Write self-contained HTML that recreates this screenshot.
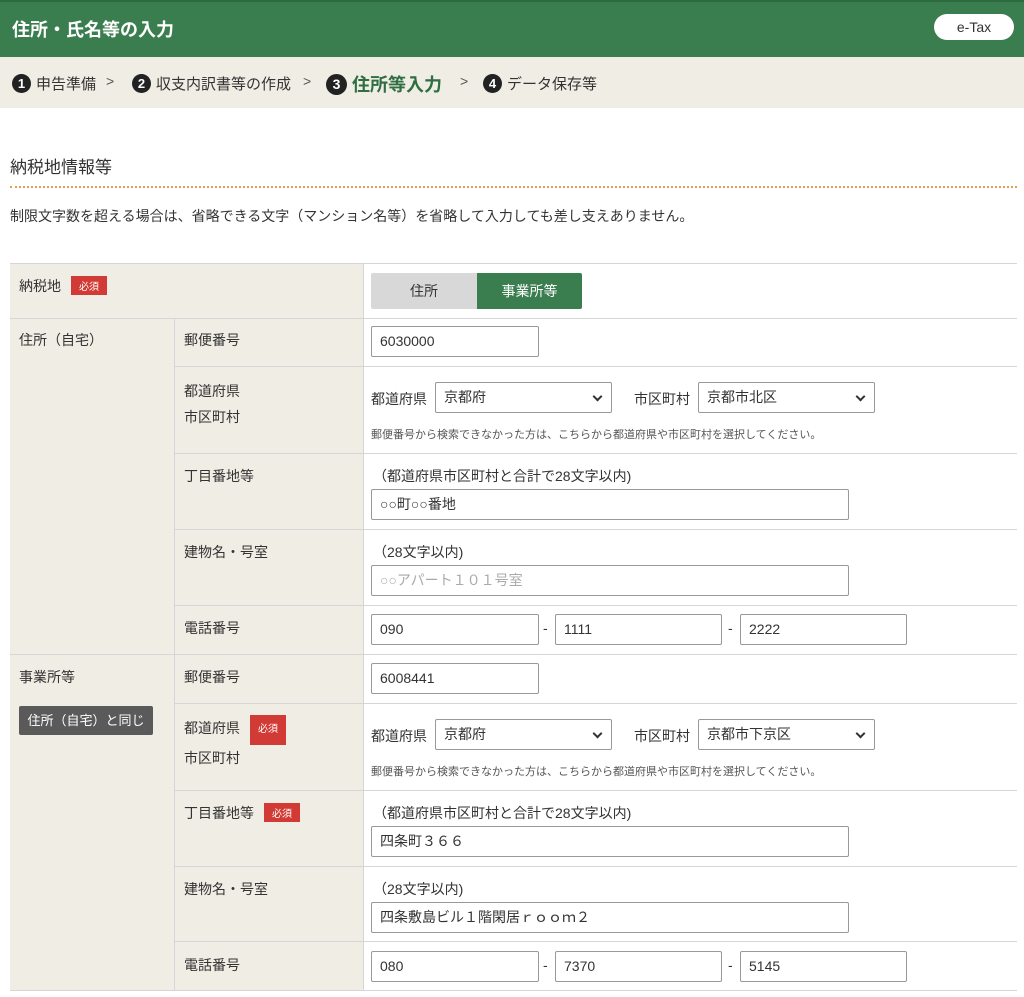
<!DOCTYPE html>
<html><head><meta charset="utf-8"><style>
*{box-sizing:border-box;margin:0;padding:0}
body{width:1024px;height:997px;background:#fff;font-family:"Liberation Sans","Noto Sans CJK JP",sans-serif;color:#333;position:relative;overflow:hidden;font-size:14px}
.a{position:absolute}
.hdr{left:0;top:0;width:1024px;height:57px;background:#3a7d4f;border-top:2px solid #2e6a40}
.hdr h1{position:absolute;left:12px;top:14px;color:#fff;font-size:18px;font-weight:bold}
.etax{right:10px;top:14px;width:80px;height:26px;background:#fff;border-radius:13px;text-align:center;line-height:26px;font-size:14px;color:#333}
.steps{left:0;top:57px;width:1024px;height:51px;background:#f0ede5}
.st{top:15px;font-size:15px;color:#333;display:flex;align-items:center}
.n{display:inline-block;width:19px;height:19px;border-radius:50%;background:#222;color:#fff;font-size:13px;font-weight:bold;text-align:center;line-height:19px;margin-right:5px}
.gt{top:73px;color:#555;font-size:14px}
.bg{background:#f0ede5}
.hl{height:1px;background:#d6d6d6}
.vl{width:1px;background:#d6d6d6}
.lab{font-size:14px;color:#333}
.req{display:inline-block;background:#d23b35;color:#fff;font-size:10px;padding:2px 8px;margin-left:10px;vertical-align:1px}
.in{border:1px solid #999;border-radius:2px;height:31px;padding:0 8px;line-height:29px;font-size:14px;color:#333;background:#fff}
.sel{border:1px solid #999;border-radius:2px;height:31px;padding:0 8px;line-height:29px;font-size:14px;background:#fff}
.sel:after{content:"";position:absolute;right:10px;top:10px;width:5px;height:5px;border-right:2px solid #333;border-bottom:2px solid #333;transform:rotate(45deg)}
.small{font-size:11px;color:#555}
</style></head><body>
<div class="a hdr"><h1>住所・氏名等の入力</h1></div>
<div class="a etax">e-Tax</div>
<div class="a steps"></div>
<div class="a st" style="left:12px;top:73px"><span class="n">1</span>申告準備</div>
<div class="a gt" style="left:106px">&gt;</div>
<div class="a st" style="left:132px;top:73px"><span class="n">2</span>収支内訳書等の作成</div>
<div class="a gt" style="left:303px">&gt;</div>
<div class="a st" style="left:326px;top:71px;font-size:18px;font-weight:bold;color:#2f6e42"><span class="n" style="width:21px;height:21px;line-height:21px;font-size:14px">3</span>住所等入力</div>
<div class="a gt" style="left:460px">&gt;</div>
<div class="a st" style="left:483px;top:73px"><span class="n">4</span>データ保存等</div>

<div class="a" style="left:10px;top:153px;font-size:17px;color:#333">納税地情報等</div>
<div class="a" style="left:10px;top:186px;width:1007px;border-top:2px dotted #e0a050"></div>
<div class="a" style="left:10px;top:206px;font-size:14px">制限文字数を超える場合は、省略できる文字（マンション名等）を省略して入力しても差し支えありません。</div>

<!-- backgrounds -->
<div class="a bg" style="left:10px;top:263px;width:353px;height:728px"></div>
<div class="a hl" style="left:10px;top:263px;width:1007px"></div>
<div class="a hl" style="left:10px;top:318px;width:1007px"></div>
<div class="a hl" style="left:174px;top:366px;width:843px"></div>
<div class="a hl" style="left:174px;top:453px;width:843px"></div>
<div class="a hl" style="left:174px;top:529px;width:843px"></div>
<div class="a hl" style="left:174px;top:605px;width:843px"></div>
<div class="a hl" style="left:10px;top:654px;width:1007px"></div>
<div class="a hl" style="left:174px;top:703px;width:843px"></div>
<div class="a hl" style="left:174px;top:790px;width:843px"></div>
<div class="a hl" style="left:174px;top:866px;width:843px"></div>
<div class="a hl" style="left:174px;top:941px;width:843px"></div>
<div class="a hl" style="left:10px;top:990px;width:1007px"></div>
<div class="a vl" style="left:174px;top:318px;height:672px"></div>
<div class="a vl" style="left:363px;top:263px;height:727px"></div>

<div class="a lab" style="left:19px;top:276px">納税地<span class="req">必須</span></div>
<div class="a" style="left:371px;top:273px;width:106px;height:36px;background:#d8d8d8;text-align:center;line-height:36px;border-radius:2px 0 0 2px">住所</div>
<div class="a" style="left:477px;top:273px;width:105px;height:36px;background:#3a7d4f;color:#fff;text-align:center;line-height:36px;border-radius:0 2px 2px 0">事業所等</div>

<div class="a lab" style="left:19px;top:330px">住所（自宅）</div>
<div class="a lab" style="left:184px;top:330px">郵便番号</div>
<div class="a in" style="left:371px;top:326px;width:168px">6030000</div>
<div class="a lab" style="left:184px;top:378px;line-height:26px">都道府県<br>市区町村</div>
<div class="a lab" style="left:371px;top:389px">都道府県</div>
<div class="a sel" style="left:435px;top:382px;width:177px">京都府</div>
<div class="a lab" style="left:634px;top:389px">市区町村</div>
<div class="a sel" style="left:698px;top:382px;width:177px">京都市北区</div>
<div class="a small" style="left:371px;top:426px">郵便番号から検索できなかった方は、こちらから都道府県や市区町村を選択してください。</div>
<div class="a lab" style="left:184px;top:466px">丁目番地等</div>
<div class="a lab" style="left:373px;top:466px">（都道府県市区町村と合計で28文字以内)</div>
<div class="a in" style="left:371px;top:489px;width:478px">○○町○○番地</div>
<div class="a lab" style="left:184px;top:542px">建物名・号室</div>
<div class="a lab" style="left:373px;top:542px">（28文字以内)</div>
<div class="a in" style="left:371px;top:565px;width:478px;color:#aaa">○○アパート１０１号室</div>
<div class="a lab" style="left:184px;top:618px">電話番号</div>
<div class="a in" style="left:371px;top:614px;width:168px">090</div>
<div class="a lab" style="left:543px;top:620px">-</div>
<div class="a in" style="left:555px;top:614px;width:167px">1111</div>
<div class="a lab" style="left:728px;top:620px">-</div>
<div class="a in" style="left:740px;top:614px;width:167px">2222</div>

<div class="a lab" style="left:19px;top:667px">事業所等</div>
<div class="a" style="left:19px;top:706px;width:134px;height:29px;background:#5a5a5a;color:#fff;font-size:13px;text-align:center;line-height:29px;border-radius:2px">住所（自宅）と同じ</div>
<div class="a lab" style="left:184px;top:667px">郵便番号</div>
<div class="a in" style="left:371px;top:663px;width:168px">6008441</div>
<div class="a lab" style="left:184px;top:715px;line-height:26px">都道府県<span class="req">必須</span><br>市区町村</div>
<div class="a lab" style="left:371px;top:726px">都道府県</div>
<div class="a sel" style="left:435px;top:719px;width:177px">京都府</div>
<div class="a lab" style="left:634px;top:726px">市区町村</div>
<div class="a sel" style="left:698px;top:719px;width:177px">京都市下京区</div>
<div class="a small" style="left:371px;top:763px">郵便番号から検索できなかった方は、こちらから都道府県や市区町村を選択してください。</div>
<div class="a lab" style="left:184px;top:803px">丁目番地等<span class="req">必須</span></div>
<div class="a lab" style="left:373px;top:803px">（都道府県市区町村と合計で28文字以内)</div>
<div class="a in" style="left:371px;top:826px;width:478px">四条町３６６</div>
<div class="a lab" style="left:184px;top:879px">建物名・号室</div>
<div class="a lab" style="left:373px;top:879px">（28文字以内)</div>
<div class="a in" style="left:371px;top:902px;width:478px">四条敷島ビル１階閑居ｒｏｏｍ２</div>
<div class="a lab" style="left:184px;top:955px">電話番号</div>
<div class="a in" style="left:371px;top:951px;width:168px">080</div>
<div class="a lab" style="left:543px;top:957px">-</div>
<div class="a in" style="left:555px;top:951px;width:167px">7370</div>
<div class="a lab" style="left:728px;top:957px">-</div>
<div class="a in" style="left:740px;top:951px;width:167px">5145</div>
</body></html>
